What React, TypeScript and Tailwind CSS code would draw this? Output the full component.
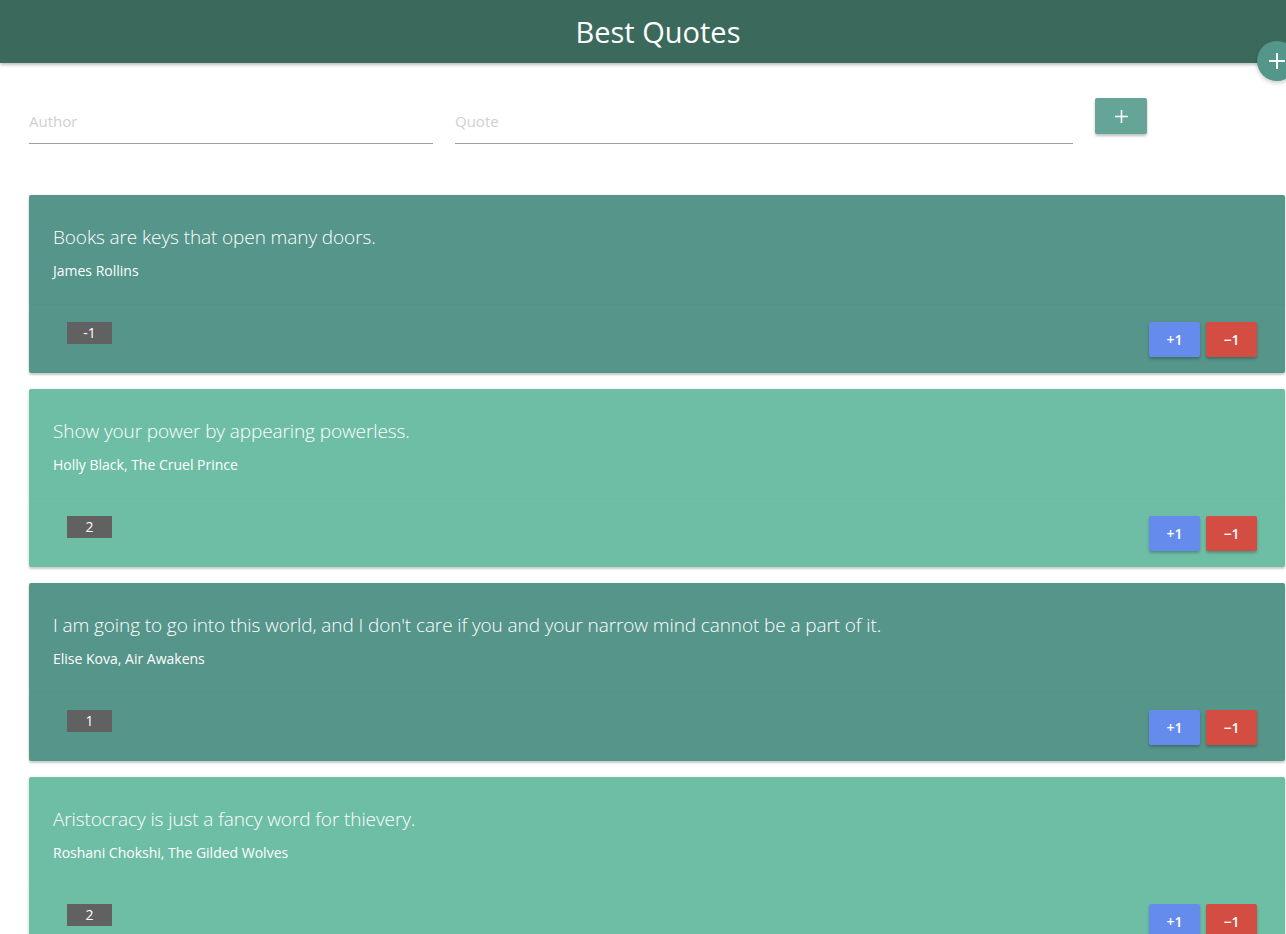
import React from "react";

interface Quote {
  text: string;
  author: string;
  score: number;
}

const quotes: Quote[] = [
  { text: "Books are keys that open many doors.", author: "James Rollins", score: -1 },
  { text: "Show your power by appearing powerless.", author: "Holly Black, The Cruel Prince", score: 2 },
  {
    text: "I am going to go into this world, and I don't care if you and your narrow mind cannot be a part of it.",
    author: "Elise Kova, Air Awakens",
    score: 1,
  },
  { text: "Aristocracy is just a fancy word for thievery.", author: "Roshani Chokshi, The Gilded Wolves", score: 2 },
];

const font = { fontFamily: '"Open Sans", "Noto Sans", sans-serif' };

const QuoteCard = ({ quote, dark }: { quote: Quote; dark: boolean }) => {
  return (
    <div
      className={
        "shrink-0 rounded-[2px] shadow-[0_2px_2px_rgba(0,0,0,0.14),0_1px_4px_rgba(0,0,0,0.12)] text-white " +
        (dark ? "bg-[#55958a]" : "bg-[#6ebea5]")
      }
    >
      <div className="h-[110px] px-6 pt-[28px] border-b border-black/[0.015]">
        <p className="text-[19px] font-light leading-[28px] tracking-[-0.1px]">{quote.text}</p>
        <p className="mt-[10px] text-[14px] leading-[20px]">{quote.author}</p>
      </div>
      <div className="flex items-start justify-between h-[68px] pt-[17px] pl-[38px] pr-[28px]">
        <span className="w-[45px] h-[22px] bg-[#616161] text-[14px] leading-[22px] text-center">
          {quote.score}
        </span>
        <div className="flex gap-[6px]">
          <button className="w-[51px] h-[35px] rounded-[2px] bg-[#658ced] text-[14px] font-semibold shadow-[0_2px_3px_rgba(0,0,0,0.25)]">
            +1
          </button>
          <button className="w-[51px] h-[35px] rounded-[2px] bg-[#d44d43] text-[14px] font-semibold shadow-[0_2px_3px_rgba(0,0,0,0.25)]">
            −1
          </button>
        </div>
      </div>
    </div>
  );
};

export default function App() {
  return (
    <div className="w-full h-screen overflow-hidden bg-white" style={font}>
      <div className="w-[1316px] relative">
        <header className="h-[63px] bg-[#3b6a5c] flex items-center justify-center shadow-[0_2px_3px_rgba(0,0,0,0.25)] relative z-10">
          <h1 className="text-[29px] text-white leading-none">Best Quotes</h1>
        </header>
        <button className="absolute left-[1257px] top-[41px] z-20 w-[40px] h-[40px] rounded-full bg-[#55968a] flex items-center justify-center shadow-[0_2px_4px_rgba(0,0,0,0.2)]">
          <svg width="18" height="18" viewBox="0 0 18 18">
            <path d="M9 1v16M1 9h16" stroke="white" strokeWidth="2" />
          </svg>
        </button>

        <div className="flex items-start pl-[29px] pt-[35px] gap-[22px]">
          <input
            placeholder="Author"
            className="w-[404px] h-[46px] border-b border-[#9e9e9e] outline-none text-[15px] placeholder:text-[#d0d0d0] pt-[1px]"
          />
          <input
            placeholder="Quote"
            className="w-[618px] h-[46px] border-b border-[#9e9e9e] outline-none text-[15px] placeholder:text-[#d0d0d0] pt-[1px]"
          />
          <button className="w-[52px] h-[36px] rounded-[2px] bg-[#64a597] flex items-center justify-center shadow-[0_2px_3px_rgba(0,0,0,0.25)]">
            <svg width="13" height="13" viewBox="0 0 13 13">
              <path d="M6.5 0v13M0 6.5h13" stroke="white" strokeWidth="1.6" />
            </svg>
          </button>
        </div>

        <div className="flex flex-col gap-[16px] pl-[29px] pr-[31px] pt-[51px]">
          {quotes.map((q, i) => (
            <QuoteCard key={i} quote={q} dark={i % 2 === 0} />
          ))}
        </div>
      </div>
    </div>
  );
}
